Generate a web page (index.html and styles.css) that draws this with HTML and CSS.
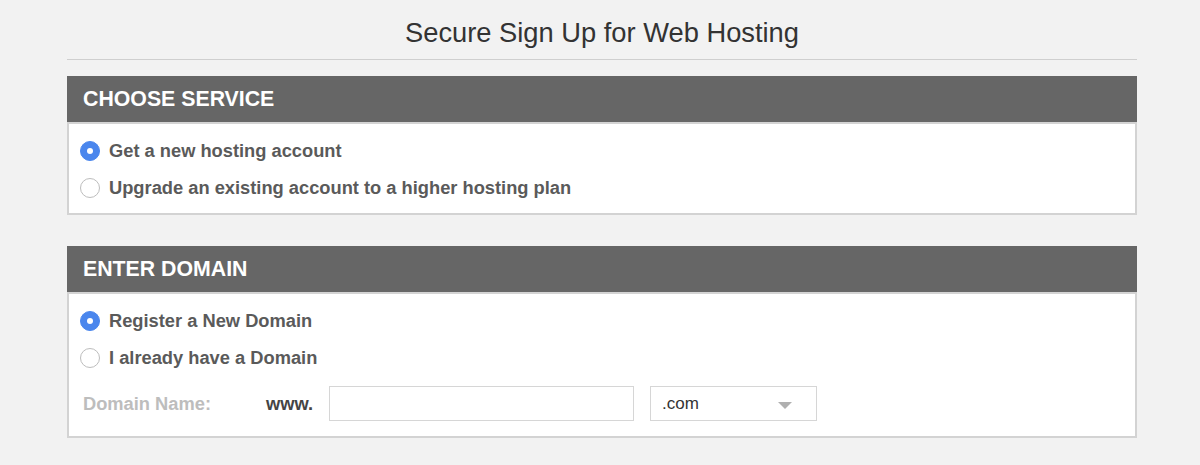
FILE: index.html
```html
<!DOCTYPE html>
<html>
<head>
<meta charset="utf-8">
<link rel="stylesheet" href="styles.css">
</head>
<body>
<div class="page">
  <h1 class="title">Secure Sign Up for Web Hosting</h1>

  <section class="card">
    <div class="card-head">CHOOSE SERVICE</div>
    <div class="card-body">
      <label class="opt"><span class="radio checked"></span>Get a new hosting account</label>
      <label class="opt"><span class="radio"></span>Upgrade an existing account to a higher hosting plan</label>
    </div>
  </section>

  <section class="card">
    <div class="card-head">ENTER DOMAIN</div>
    <div class="card-body domain-body">
      <label class="opt"><span class="radio checked"></span>Register a New Domain</label>
      <label class="opt"><span class="radio"></span>I already have a Domain</label>
      <div class="domain-row">
        <span class="dn-label">Domain Name:</span>
        <span class="www">www.</span>
        <span class="input"></span>
        <span class="select">.com<span class="caret"></span></span>
      </div>
    </div>
  </section>
</div>
</body>
</html>
```

FILE: styles.css
```css
html, body {
  margin: 0;
  padding: 0;
  background: #f2f2f2;
}
body {
  font-family: "Liberation Sans", Arial, sans-serif;
}
.page {
  width: 1070px;
  margin-left: 67px;
}
.title {
  margin: 0;
  height: 60px;
  box-sizing: border-box;
  padding-top: 18px;
  border-bottom: 1px solid #cfcfcf;
  text-align: center;
  font-size: 27.3px;
  font-weight: normal;
  color: #333;
  line-height: 30px;
}
.card {
  margin-top: 16px;
  border: 2px solid #d3d3d3;
  border-top: 0;
  background: #fff;
}
.card + .card {
  margin-top: 31px;
}
.card-head {
  height: 46px;
  background: #666;
  color: #fff;
  font-weight: bold;
  font-size: 21.3px;
  line-height: 46px;
  border-bottom: 2px solid #d3d3d3;
  margin: 0 -2px;
  padding-left: 16px;
}
.card-body {
  padding: 8px 11px 7px;
  display: flex;
  flex-direction: column;
}
.opt {
  height: 37px;
  display: flex;
  align-items: center;
  gap: 9px;
  font-size: 18.3px;
  font-weight: bold;
  color: #5a5a5a;
}
.radio {
  width: 20px;
  height: 20px;
  box-sizing: border-box;
  border-radius: 50%;
  border: 1px solid #bdbdbd;
  background: #fff;
  position: relative;
  flex: none;
}
.radio.checked {
  background: #4a86ed;
  border-color: #4a86ed;
}
.radio.checked::after {
  content: "";
  position: absolute;
  left: 6px;
  top: 6px;
  width: 6px;
  height: 6px;
  border-radius: 50%;
  background: #fff;
}
.domain-body {
  padding-bottom: 15px;
}
.domain-row {
  margin-top: 10px;
  height: 35px;
  display: flex;
  align-items: center;
  padding-left: 3px;
}
.dn-label {
  width: 183px;
  font-size: 18.3px;
  font-weight: bold;
  color: #bdbdbd;
}
.www {
  width: 63px;
  font-size: 18.3px;
  font-weight: bold;
  color: #444;
}
.input {
  width: 305px;
  height: 35px;
  box-sizing: border-box;
  border: 1px solid #d6d6d6;
  background: #fff;
}
.select {
  margin-left: 16px;
  width: 167px;
  height: 35px;
  box-sizing: border-box;
  border: 1px solid #d6d6d6;
  background: #fff;
  display: flex;
  align-items: center;
  padding-left: 11px;
  font-size: 17px;
  color: #333;
  position: relative;
}
.caret {
  position: absolute;
  right: 24px;
  top: 15px;
  width: 0;
  height: 0;
  border-left: 7px solid transparent;
  border-right: 7px solid transparent;
  border-top: 7px solid #b0b0b0;
}
```
